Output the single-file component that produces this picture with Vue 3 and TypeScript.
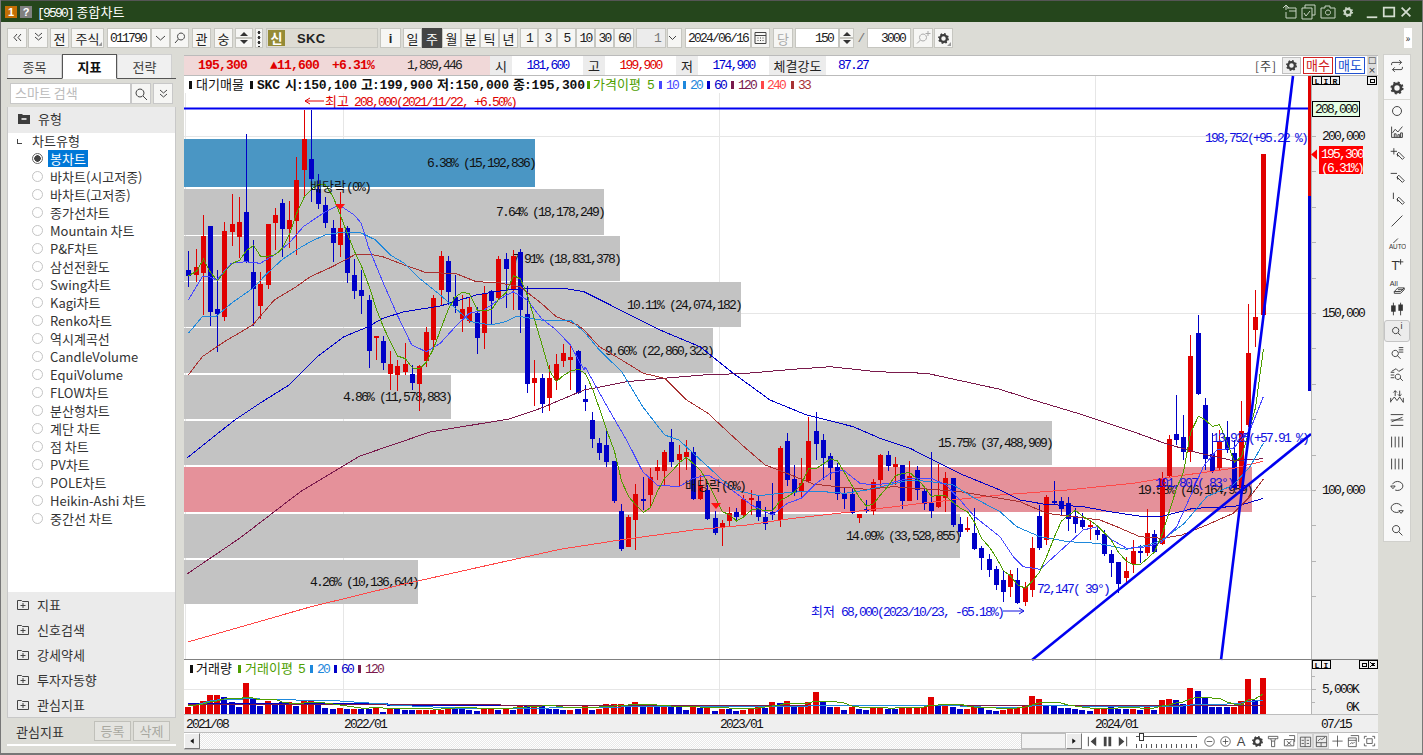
<script setup lang="ts">
interface ToolItem {
  t?: string
  w: number
  ml?: number
  d?: string
  gear?: boolean
  cls?: string
}

type Pt = [number, number]

// toolbar, left to right
const toolbar: ToolItem[] = [
  { w: 20, d: 'M9 6L6 9.5 9 13M13 6l-3 3.5 3 3.5' },
  { w: 20, ml: 1, d: 'M6 5l3.5 3L13 5M6 9l3.5 3L13 9' },
  { t: '전', w: 19, ml: 2 },
  { t: '주식', w: 33, ml: 2, cls: 'corner' },
  { t: '011790', w: 44, ml: 3, cls: 'input mono' },
  { w: 19, d: 'M5 8l4.5 4L14 8' },
  { w: 19, d: 'M11 5a3.5 3.5 0 1 0 .01 0M8.5 11L5 15' },
  { t: '관', w: 19, ml: 3 },
  { t: '숭', w: 19, ml: 3 },
  { w: 18, ml: 2, cls: 'spin' },
  { w: 8, ml: 2, cls: 'dots' },
  { w: 112, ml: 3, cls: 'combo' },
  { t: 'i', w: 21, ml: 2, cls: 'bold' },
  { t: '일', w: 19, ml: 2 },
  { t: '주', w: 20, cls: 'dark' },
  { t: '월', w: 19 },
  { t: '분', w: 19 },
  { t: '틱', w: 19 },
  { t: '년', w: 19 },
  { t: '1', w: 18, ml: 2, cls: 'mono' },
  { t: '3', w: 19, cls: 'mono' },
  { t: '5', w: 19, cls: 'mono' },
  { t: '10', w: 19, cls: 'mono' },
  { t: '30', w: 19, cls: 'mono' },
  { t: '60', w: 20, cls: 'mono' },
  { t: '1', w: 30, ml: 2, cls: 'mono right off' },
  { w: 15, ml: 1, d: 'M4 8l3.5 3.5L11 8' },
  { t: '2024/06/16', w: 66, ml: 3, cls: 'input mono' },
  { w: 19, d: 'M4 4.5h11v11H4zM4 7.5h11M6.5 10h1M9 10h1M11.5 10h1M6.5 12.5h1M9 12.5h1M11.5 12.5h1' },
  { t: '당', w: 20, ml: 3, cls: 'off-text' },
  { t: '150', w: 44, ml: 2, cls: 'input mono right' },
  { w: 15, cls: 'spin' },
  { t: '/', w: 13, cls: 'plain mono' },
  { t: '3000', w: 44, cls: 'input mono right' },
  { w: 20, ml: 2, d: 'M9 6a3.5 3.5 0 1 0 .01 0M6.5 12L3 15.5M14 3v5M11.5 5.5h5', cls: 'off-icon' },
  { w: 19, ml: 1, gear: true, cls: 'corner' },
]

const tabs = ['종목', '지표', '전략']

const chartTypes = [
  '봉차트', '바차트(시고저종)', '바차트(고저종)', '종가선차트', 'Mountain 차트', 'P&F차트', '삼선전환도',
  'Swing차트', 'Kagi차트', 'Renko차트', '역시계곡선', 'CandleVolume', 'EquiVolume', 'FLOW차트',
  '분산형차트', '계단 차트', '점 차트', 'PV차트', 'POLE차트', 'Heikin-Ashi 차트', '중간선 차트',
]

const groups = ['지표', '신호검색', '강세약세', '투자자동향', '관심지표']

const infoCells = [
  { t: '195,300', w: 77, cls: 'pink red b' },
  { t: '▲11,600', w: 67, cls: 'pink red b' },
  { t: '+6.31%', w: 50, cls: 'pink red b' },
  { t: '1,869,446', w: 112, cls: 'pink' },
  { t: '시', w: 22, cls: 'lbl' },
  { t: '181,600', w: 71, cls: 'blue' },
  { t: '고', w: 22, cls: 'lbl' },
  { t: '199,900', w: 71, cls: 'red' },
  { t: '저', w: 22, cls: 'lbl' },
  { t: '174,900', w: 71, cls: 'blue' },
  { t: '체결강도', w: 57, cls: 'lbl' },
  { t: '87.27', w: 54, cls: 'blue' },
]

// price candles, read off the reference at 3x: color top bodyTop bodyBottom bottom
const rawA = `b 452 510 527 560,r 447 501 524 545,r 345 407 518 645,b 378 378 635 678,b 510 627 641 755,r 365 393 650 662,r 282 372 395 437,r 290 366 410 475,b 102 336 485 490,b 420 516 566 678,r 516 552 618 657,r 372 372 554 566,r 324 345 368 450,b 297 309 387 470,r 303 360 387 445,r 170 239 363 465,r 30 117 210 290,b 30 177 237 305,b 222 267 312 327,b 291 315 369 385,b 360 384 429 485,r 276 384 435 470,b 378 384 518 548,b 477 525 572 597,b 510 570 588 642,b 585 600 752 803,r 708 709 712 780,b 708 723 789 810,r 753 792 822 870,r 780 798 825 873,r 729 792 816 825,b 795 822 849 870,r 795 798 852 932,r 681 696 783 800,r 585 594 720 750,r 453 468 570 615,b 468 483 576 615,b 525 591 618 640,r 585 627 657 697,r 590 621 663 670,b 620 639 714 762,r 558 579 699 747,b 570 573 603 675,r 468 477 594 600,b 460 477 507 624,r 450 468 570 630,b 447 456 630 698,b 558 643 852 880,r 780 834 849 917,b 822 834 912 938,r 795 834 894 932,r 762 792 840 870,r 732 759 783 800,r 735 771 780 870`
const rawB = `b 60 63 190 192,b 165 207 215 242,b 247 270 327 354,b 324 339 369 390,b 300 345 396 412,b 393 393 513 520,b 522 543 657 662,r 555 561 651 651,r 462 492 570 660,b 440 507 513 540,r 415 441 495 528,r 390 411 423 450,r 360 366 423 465,b 297 336 396 410,r 345 372 390 470,r 330 366 381 420,b 352 366 507 510,r 435 465 507 510,b 465 480 567 570,b 543 564 609 615,r 570 579 591 648,r 530 549 573 588,b 534 546 561 570,r 495 507 555 558,r 480 504 510 555,b 495 513 561 573,b 530 561 582 600,b 459 546 555 570,r 348 354 570 590,b 309 333 450 467,b 405 447 489 498,r 384 459 486 500,r 261 333 453 460,b 246 303 342 390,b 312 330 384 450,b 370 378 414 450,b 400 411 492 510,b 472 489 507 537,b 478 492 549 552,r 552 552 564 579,b 510 537 543 549,r 447 456 543 555,r 372 375 450 475,b 363 375 408 423,r 381 402 411 465,b 405 405 513 537,r 393 438 513 513,b 408 420 480 510,b 477 483 522 540,b 366 519 543 564,r 402 498 531 534,r 426 444 504 546,b 444 444 585 592,b 561 582 606 622,r 560 593 600 607,b 535 609 657 660,b 648 654 684 720,b 672 687 720 740,b 708 717 765 780`
const rawC = `b 810 840 876 905,r 810 822 860 890,b 805 840 910 912,r 845 862 907 917,r 710 744 870 890,b 615 648 744 750,r 585 591 720 735,b 543 603 609 612,b 590 603 627 648,b 592 609 657 693,b 625 648 672 699,b 640 660 681 687,r 660 675 681 720,b 680 690 705 720,b 690 702 762 768,b 750 762 789 830,b 785 786 852 880,r 770 813 834 855,r 720 753 792 820,b 735 753 759 788,r 627 699 759 768,b 690 702 756 760,r 516 534 732 735,r 405 417 528 530,b 285 402 420 435,b 345 411 456 480,r 105 168 456 485,b 45 99 282 285,b 295 315 477 510,b 400 462 513 520,r 390 427 504 510,b 363 411 450 460,b 420 459 564 570,r 303 393 564 600,r 12 159 375 380,r -30 51 90 140,r -438 -438 45 45`

const parse = (raw: string, oy: number) =>
  raw.split(',').map((row) => {
    const [c, a, b, e, f] = row.split(' ')
    return { up: c === 'r', hi: oy + +a / 3, top: oy + +b / 3, bot: oy + +e / 3, lo: oy + +f / 3 }
  })

const candleX = (i: number) => Math.round(188.3 + i * 7.21)

const candles = [...parse(rawA, 100), ...parse(rawB, 330), ...parse(rawC, 300)].map((c, i) => ({
  ...c,
  x: candleX(i),
}))

const toPoints = (pts: Pt[]) => pts.map(([x, y]) => `${x.toFixed(1)},${y.toFixed(1)}`).join(' ')

const sma = (vals: number[], n: number) =>
  vals.map((_, i) => {
    const part = vals.slice(Math.max(0, i - n + 1), i + 1)
    return part.reduce((s, v) => s + v, 0) / part.length
  })

// joins crops of the reference: [offsetX, offsetY, points at 3x]
const join = (...segs: [number, number, number[]][]) => {
  const out: Pt[] = []
  for (const [ox, oy, arr] of segs) {
    for (let i = 0; i < arr.length; i += 2) {
      const x = ox + arr[i] / 3
      if (!out.length || x > out[out.length - 1][0]) out.push([x, oy + arr[i + 1] / 3])
    }
  }
  return out
}

const closes = candles.map((c) => (c.up ? c.top : c.bot))
const ma5 = sma(closes, 5).map((y, i): Pt => [candles[i].x + 0.5, y])

const ma10 = join(
  [184, 100, [13,600,55,530,76,530,98,540,142,490,184,485,229,490,271,465,315,430,358,380,424,335,466,315,511,345,532,370,553,440,596,545,640,645,683,735,727,755,769,730,814,680,856,640,900,630,943,600,987,575,1030,600,1072,655,1117,690,1159,735,1200,810]],
  [560, 330, [75,110,139,225,205,340,248,425,292,465,357,470,400,445,444,435,487,460,529,490,574,525,616,545,637,555,682,520,724,505,769,460,811,430,850,420,900,460,941,465,985,460,1049,445,1114,445,1158,465,1200,510,1244,560,1320,620]],
  [1000, 300, [0,710,40,770,70,800,120,808,184,750,250,690,292,680,337,720,380,745,445,740,487,725,530,680,575,580,610,500,650,450,700,445,750,390,790,290]],
)
const ma20 = join(
  [184, 100, [13,700,55,650,98,648,142,610,206,565,250,520,293,480,337,450,379,425,424,405,466,398,530,398,575,420,619,465,661,490,706,535,769,585,814,625,860,665,921,675,965,665,1000,648,1072,660,1159,660,1200,695]],
  [560, 330, [118,60,185,125,248,230,314,315,357,330,400,370,444,410,487,450,529,480,596,497,660,490,724,485,790,485,855,490,920,480,985,465,1049,450,1114,455,1180,465,1244,505,1320,545]],
  [1000, 300, [0,620,50,680,120,710,205,725,292,730,380,748,445,735,487,720,553,670,620,590,700,555,750,500,790,430]],
)
const ma33 = join(
  [184, 100, [13,825,55,770,121,725,206,675,271,600,337,560,379,530,445,500,511,465,553,462,596,470,661,495,727,518,814,520,877,545,943,548,1008,560,1072,610,1117,650,1181,675,1200,690]],
  [560, 330, [118,50,185,90,250,130,314,145,380,210,444,250,487,290,552,350,616,405,680,430,760,462,830,470,920,478,1000,470,1114,478,1200,485,1320,505]],
  [1000, 300, [0,595,60,605,140,640,220,650,300,660,350,680,420,710,487,715,545,705,620,675,700,640,750,590,790,538]],
)
const ma60 = join(
  [0, 0, [561,1374,636,1314]],
  [184, 100, [155,958,235,905,315,855,400,770,480,710,553,680,596,655,661,635,769,618,877,585,965,570,1030,565,1140,565,1200,575]],
  [560, 330, [300,0,420,50,520,130,630,210,740,255,880,290,960,325,1050,355,1120,390,1210,435,1320,480]],
  [1000, 300, [0,575,60,600,130,612,250,620,330,635,430,650,490,648,580,625,700,620,740,610,790,595]],
)
const ma120 = join(
  [0, 0, [561,1722,720,1614,900,1476,1080,1368,1290,1296,1527,1257]],
  [184, 100, [1070,925,1200,870]],
  [560, 330, [100,175,200,155,310,145,430,135,560,130,700,118,810,110,950,125,1100,130,1320,178]],
  [1000, 300, [0,270,100,300,250,345,400,395,500,432,600,460,700,482,790,476]],
)
const ma240 = join(
  [0, 0, [564,1926,930,1821,1200,1755,1440,1701]],
  [560, 330, [0,658,180,630,400,600,560,585,700,565,880,545,1100,518,1320,495]],
  [1000, 300, [200,570,400,550,520,530,700,505,790,484]],
)

const maLines = [
  { cls: 'c240', pts: toPoints(ma240) },
  { cls: 'c120', pts: toPoints(ma120) },
  { cls: 'c60', pts: toPoints(ma60) },
  { cls: 'c33', pts: toPoints(ma33) },
  { cls: 'c20', pts: toPoints(ma20) },
  { cls: 'c10', pts: toPoints(ma10) },
  { cls: 'c5', pts: toPoints(ma5) },
]

const bands = [
  { y: 139, h: 48, r: 535, t: '6.38% (15,192,836)', cls: 'hot' },
  { y: 189, h: 46, r: 604, t: '7.64% (18,178,249)', cls: '' },
  { y: 236, h: 45, r: 620, t: '7.91% (18,831,378)', cls: '' },
  { y: 282, h: 45, r: 741, t: '10.11% (24,074,182)', cls: '' },
  { y: 328, h: 45, r: 713, t: '9.60% (22,860,323)', cls: '' },
  { y: 375, h: 44, r: 451, t: '4.86% (11,578,883)', cls: '' },
  { y: 421, h: 44, r: 1052, t: '15.75% (37,488,909)', cls: '' },
  { y: 467, h: 45, r: 1252, t: '19.58% (46,164,959)', cls: 'now' },
  { y: 514, h: 44, r: 960, t: '14.09% (33,528,855)', cls: '' },
  { y: 560, h: 44, r: 418, t: '4.26% (10,136,644)', cls: '' },
]

const legend = [
  { x: 189, bar: 'k' },
  { x: 196, t: '대기매물', cls: 'ko k' },
  { x: 250, bar: 'k' },
  { x: 257, t: 'SKC', cls: 'bn k' },
  { x: 285, t: '시', cls: 'ko k bk' },
  { x: 296, t: ':150,100', cls: 'bn k' },
  { x: 361, t: '고', cls: 'ko k bk' },
  { x: 372, t: ':199,900', cls: 'bn k' },
  { x: 437, t: '저', cls: 'ko k bk' },
  { x: 448, t: ':150,000', cls: 'bn k' },
  { x: 513, t: '종', cls: 'ko k bk' },
  { x: 524, t: ':195,300', cls: 'bn k' },
  { x: 587, bar: 'c5' },
  { x: 593, t: '가격이평', cls: 'ko fc5' },
  { x: 647, t: '5', cls: 'num fc5' },
  { x: 659, bar: 'c10' },
  { x: 666, t: '10', cls: 'num fc10' },
  { x: 683, bar: 'c20' },
  { x: 690, t: '20', cls: 'num fc20' },
  { x: 707, bar: 'c60' },
  { x: 714, t: '60', cls: 'num fc60' },
  { x: 731, bar: 'c120' },
  { x: 738, t: '120', cls: 'num fc120' },
  { x: 761, bar: 'c240' },
  { x: 767, t: '240', cls: 'num fc240' },
  { x: 791, bar: 'c33' },
  { x: 798, t: '33', cls: 'num fc33' },
]

const volLegend = [
  { x: 190, bar: 'k' },
  { x: 196, t: '거래량', cls: 'ko k' },
  { x: 238, bar: 'c5' },
  { x: 245, t: '거래이평', cls: 'ko fc5' },
  { x: 298, t: '5', cls: 'num fc5' },
  { x: 310, bar: 'c20' },
  { x: 317, t: '20', cls: 'num fc20' },
  { x: 334, bar: 'c60' },
  { x: 341, t: '60', cls: 'num fc60' },
  { x: 358, bar: 'c120' },
  { x: 365, t: '120', cls: 'num fc120' },
]

const notes = [
  { x: 325, y: 106, t: '최고', cls: 'ko fred' },
  { x: 354, y: 106, t: '208,000(2021/11/22, +6.50%)', cls: 'num fred' },
  { x: 1205, y: 142, t: '198,752(+95.22 %)', cls: 'num fblue' },
  { x: 310, y: 191, t: '배당락', cls: 'ko k' },
  { x: 346, y: 191, t: '(0%)', cls: 'num k' },
  { x: 685, y: 490, t: '배당락', cls: 'ko k' },
  { x: 721, y: 490, t: '(0%)', cls: 'num k' },
  { x: 1037, y: 593, t: '72,147( 39°)', cls: 'num fblue' },
  { x: 811, y: 616, t: '최저', cls: 'ko fblue' },
  { x: 841, y: 616, t: '68,000(2023/10/23, -65.18%)', cls: 'num fblue' },
  { x: 1212, y: 442, t: '13,925(+57.91 %)', cls: 'num fblue' },
  { x: 1155, y: 487, t: '101,807( 83°)', cls: 'num fblue' },
]

// signed volume bar heights at 3x, positive red, negative blue
const volRaw = [
  22,26,39,57,57,-51,-36,-21,93,-45,-24,39,-27,-36,36,-24,39,39,-36,-18,-15,18,-15,16,-15,-15,21,-6,18,-15,
  -12,-12,12,12,12,12,21,-21,-15,-12,-9,15,18,-12,18,-12,27,-26,20,-27,-15,-15,-12,12,-15,27,-12,15,29,
  30,30,-24,36,-24,24,-21,21,-21,-24,-12,21,-18,18,-9,15,-15,-9,12,15,27,-18,36,-33,39,-21,27,36,66,-36,
  -21,21,-12,21,-15,-12,18,18,-15,-15,18,18,18,21,51,-24,24,-21,-15,15,21,-18,-12,-9,12,15,18,27,54,45,
  -24,-24,-18,-18,-15,-12,-9,15,15,-21,-15,-15,15,-12,21,-12,42,45,-42,-30,78,-69,-51,-21,-21,-21,21,39,105,-42,108,
]
const volBars = volRaw.map((v, i) => {
  const h = Math.abs(v) / 3
  return { x: candleX(i) - 3, y: 714 - h, h, up: v > 0 }
})
const volAbs = volRaw.map((v) => Math.abs(v) / 3)
const volMa5 = toPoints(sma(volAbs, 5).map((h, i): Pt => [candleX(i), Math.round(712 - h * 0.85)]))
const volMa20 = toPoints(sma(volAbs, 20).map((h, i): Pt => [candleX(i), Math.round(713 - h)]))

const yTicks = Array.from({ length: 15 }, (_, i) => 136 + (i - 1) * 35.4)

const tools = [
  { d: 'M4 9V7.5A1.5 1.5 0 0 1 5.5 6H15M12.5 3.5L15 6l-2.5 2.5M16 11v1.5a1.5 1.5 0 0 1-1.5 1.5H5M7.5 11.5L5 14l2.5 2.5' },
  { gear: true },
  { d: 'M15 10a5 5 0 1 1-10 0a5 5 0 1 1 10 0' },
  { d: 'M4 4v12h12M7 16v-4h2v4M11 16v-3h2v3M14 16v-5h2v5M5 11l3-4 3 3 5-6' },
  { d: 'M3 7h7M6.5 3.5v7M10 10l2-2 6 6-2 2zM10 10l1 3' },
  { d: 'M3 6h7M10 10l2-2 6 6-2 2zM10 10l1 3' },
  { d: 'M6 3v7M10 10l2-2 6 6-2 2zM10 10l1 3' },
  { d: 'M4 16L16 4' },
  { d: 'M6 10l5-5', label: 'AUTO', lx: 1, ly: 17, ls: 7 },
  { d: 'M14 3.5v6M11 6.5h6', label: 'T', lx: 4, ly: 16, ls: 14 },
  { d: 'M7 15l4-4h7l-4 4zM7 15v2h7l4-4v-2M11 13h6', label: 'All', lx: 2, ly: 9, ls: 8 },
  { d: 'M6 3v14M14 3v14', bars: true },
  { d: 'M8.5 6a3.5 3.5 0 1 0 .01 0M11 12l3 3', label: 'i', lx: 14, ly: 8, ls: 10, sel: true },
  { d: 'M8 7a3.5 3.5 0 1 0 .01 0M10.5 13l3.5 3.5M12 4h5M12 6.5h5M12 9h5' },
  { d: 'M3 7h4M3 10h4M3 13h4M11 9a3 3 0 1 0 .01 0M13.5 13.5l3 3M4 6l5-3 3 3 5-3' },
  { d: 'M8 3v6M6 5l2-2 2 2M13 9V3M11 7l2 2 2-2M3 15l4-5 3 4 3-4 4 6M3 11v5M17 11v5' },
  { d: 'M3 4h14M3 16h14M4 12L16 7M3 10h14' },
  { d: 'M4 4v12M8 4v12M12 4v12M16 4v12' },
  { d: 'M4 4v12M8 4v12M12 4v12M16 4v12' },
  { d: 'M5 8a6 5 0 1 1 3 6.5M3 10h5l-2.5 3z' },
  { d: 'M15 8a6 5 0 1 0-3 6.5M17 13h-5l2.5 3z' },
  { d: 'M9 5a4 4 0 1 0 .01 0M12 12l4 4' },
]

const bottomBtns: { d?: string; gear?: boolean; sel?: boolean; t?: string }[] = [
  { d: 'M9.5 5.5a6 6 0 1 0 .01 0M6 11.5h7' },
  { d: 'M9.5 5.5a6 6 0 1 0 .01 0M6 11.5h7M9.5 8v7' },
  { t: 'A' },
  { gear: true },
  { d: 'M3 5h12v3H3zM6 8l1 3M12 8l-1 3M7 11h4v7H7z' },
  { d: 'M3 9h12v8H3zM6 11l6 5M12 11l-6 5M9 4h7v8' },
  { d: 'M3 6h13v12H3zM9 6v12M4.5 10h3M4.5 14h3M11 10h3M11 14h3', sel: true },
  { d: 'M3 5h13v13H3zM3 13h13M9 13v5M5 11l3-3 2 1 4-3', sel: true },
  { d: 'M9.5 4v14M3 11h13' },
  { d: 'M6 4h10v8M3 7h10v11H3zM3 10h10M5 15l2-2 2 1 2-2' },
  { d: 'M3 8V5h3M13 5h3v3M16 14v3h-3M6 17H3v-3M6 8h7v6H6z' },
]
</script>

<template>
  <div class="win">
    <svg class="defs" width="0" height="0" aria-hidden="true">
      <symbol id="gear" viewBox="0 0 20 20">
        <circle cx="10" cy="10" r="4.5" fill="none" stroke="currentColor" stroke-width="3" />
        <circle cx="10" cy="10" r="6.3" fill="none" stroke="currentColor" stroke-width="2" stroke-dasharray="2.3 2.65" />
      </symbol>
    </svg>

    <header class="title">
      <span class="badge orange">1</span>
      <span class="badge gray">?</span>
      <span class="title-text"><span class="mono-t">[9590]</span> 종합차트</span>
      <div class="title-icons">
        <svg viewBox="0 0 16 16" class="ti"><path d="M5 4h9v10H4V8M4 6V1M1 4l3-3 3 3M7 7h7" /></svg>
        <svg viewBox="0 0 16 16" class="ti"><path d="M4 4V1h10v10h-3M1 4h10v11H1zM3 9l2 3 4-5" /></svg>
        <svg viewBox="0 0 16 16" class="ti"><path d="M1 4h4V2h5v2h5v10H1zM8 6a2.5 2.5 0 1 0 .01 0" /></svg>
        <svg viewBox="0 0 20 20" class="ti g"><use href="#gear" /></svg>
        <svg viewBox="0 0 16 16" class="wi"><path d="M2 14h12" /></svg>
        <svg viewBox="0 0 16 16" class="wi"><path d="M2 3h12v10H2z" /></svg>
        <svg viewBox="0 0 16 16" class="wi"><path d="M3 3l10 10M13 3L3 13" /></svg>
      </div>
    </header>

    <div class="toolbar">
      <div
        v-for="(b, i) in toolbar"
        :key="i"
        class="tb"
        :class="b.cls"
        :style="{ width: b.w + 'px', marginLeft: (b.ml ?? 0) + 'px' }"
      >
        <template v-if="b.cls === 'combo'">
          <span class="shin">신</span>
          <span class="skc">SKC</span>
        </template>
        <template v-else-if="b.cls === 'spin'">
          <i class="up"></i>
          <i class="mid"></i>
          <i class="down"></i>
        </template>
        <svg v-else-if="b.gear" viewBox="0 0 20 20" class="tb-gear"><use href="#gear" /></svg>
        <svg v-else-if="b.d" viewBox="0 0 19 20" class="tb-ico"><path :d="b.d" /></svg>
        <template v-else>{{ b.t }}</template>
      </div>
      <div class="more">»</div>
    </div>

    <div class="body">
      <aside class="left">
        <div class="tabs">
          <div v-for="t in tabs" :key="t" class="tab" :class="{ on: t === '지표' }">{{ t }}</div>
        </div>
        <div class="search">
          <div class="search-box">스마트 검색</div>
          <div class="search-btn">
            <svg viewBox="0 0 19 20" class="tb-ico"><path d="M8 5a4 4 0 1 0 .01 0M11 12l4 4" /></svg>
          </div>
          <div class="search-btn gap">
            <svg viewBox="0 0 19 20" class="tb-ico"><path d="M6 6l3.5 3L13 6M6 10l3.5 3L13 10" /></svg>
          </div>
        </div>
        <div class="head">
          <svg viewBox="0 0 12 11" class="folder"><path d="M0 1h4l1 1h7v9H0z" fill="#3c3c3c" /><path d="M3.5 6h5" stroke="#fff" stroke-width="1.5" /></svg>
          유형
        </div>
        <div class="tree">
          <div class="tree-root"><span class="elbow"></span>차트유형</div>
          <div v-for="(c, i) in chartTypes" :key="c" class="tree-row">
            <span class="radio" :class="{ on: i === 0 }"></span>
            <span class="tree-label" :class="{ on: i === 0 }">{{ c }}</span>
          </div>
        </div>
        <div class="groups">
          <div v-for="g in groups" :key="g" class="group">
            <svg viewBox="0 0 12 11" class="plus"><path d="M.5 1.5h4l1 1h6v8H.5zM3.5 6.5h5M6 4v5" fill="none" stroke="#444" /></svg>
            {{ g }}
          </div>
        </div>
        <div class="foot">
          <span class="foot-label">관심지표</span>
          <span class="foot-btn first">등록</span>
          <span class="foot-btn">삭제</span>
        </div>
      </aside>

      <main class="main">
        <div class="info">
          <div
            v-for="c in infoCells"
            :key="c.t"
            class="cell"
            :class="c.cls"
            :style="{ width: c.w + 'px' }"
          >{{ c.t }}</div>
          <div class="info-right">
            <span class="unit">[주]</span>
            <span class="cfg"><svg viewBox="0 0 20 20" class="tb-gear"><use href="#gear" /></svg></span>
            <span class="trade buy">매수</span>
            <span class="trade sell">매도</span>
            <span class="stack"><i>□</i><i>×</i></span>
          </div>
        </div>

        <svg class="chart" viewBox="184 76 1194 657" width="1194" height="657">
          <rect x="1311" y="76" width="67" height="657" fill="#efefef" />
          <rect x="184" y="714" width="1194" height="19" fill="#efefef" />

          <!-- grid -->
          <g class="grid">
            <path d="M343.5 76v638M719.5 76v638M1095.5 76v638M185.5 76v583M184 136.5h1127M184 313.5h1127M184 490.5h1127M184 689.5h1127" />
          </g>

          <!-- volume profile bands -->
          <rect
            v-for="b in bands"
            :key="b.y"
            x="184"
            :y="b.y"
            :width="b.r - 184"
            :height="b.h"
            class="band"
            :class="b.cls"
          />
          <text v-for="b in bands" :key="b.t" :x="b.r" :y="b.y + b.h / 2 + 4" class="num k end">{{ b.t }}</text>

          <!-- candles -->
          <g v-for="c in candles" :key="c.x" :class="c.up ? 'up' : 'dn'">
            <rect :x="c.x" :y="c.hi" width="1" :height="c.lo - c.hi" />
            <rect :x="c.x - 2" :y="c.top" width="5" :height="Math.max(c.bot - c.top, 1.5)" />
          </g>

          <polyline v-for="m in maLines" :key="m.cls" :points="m.pts" class="ma" :class="m.cls" />

          <text v-for="n in notes" :key="n.x + n.t" :x="n.x" :y="n.y" :class="n.cls">{{ n.t }}</text>

          <path d="M305 101h19M305 101l5-3M305 101l5 3" class="arrow-red" />
          <path d="M1003 611h21M1024 611l-5-3M1024 611l-5 3" class="arrow-blue" />
          <path d="M335 204h10l-5 6zM711 503h10l-5 6z" fill="#ff1010" />

          <!-- trend lines -->
          <path d="M184 108.5H1311" class="trend thin" />
          <path d="M1032 660L1311 434" class="trend" />
          <path d="M1221 660L1293 76" class="trend" />

          <!-- top legend -->
          <rect x="184" y="76" width="640" height="17" fill="#fff" />
          <template v-for="l in legend" :key="l.x">
            <rect v-if="l.bar" :x="l.x" y="81" width="3" height="8" :class="'bar-' + l.bar" />
            <text v-else :x="l.x" y="89" :class="l.cls">{{ l.t }}</text>
          </template>

          <!-- price axis -->
          <path d="M1311.5 76v638" class="axis" />
          <path
            v-for="y in yTicks"
            :key="y"
            :d="`M1312 ${Math.round(y) + 0.5}h4`"
            class="axis"
          />
          <rect x="1308" y="76" width="3" height="120" fill="#e00000" />
          <rect x="1308" y="196" width="3" height="195" fill="#0000d0" />
          <g class="boxes">
            <rect x="1312.5" y="76.5" width="9" height="8" />
            <rect x="1321.5" y="76.5" width="9" height="8" />
            <rect x="1330.5" y="76.5" width="9" height="8" />
            <text x="1314.5" y="84">L</text>
            <text x="1323.5" y="84">I</text>
            <text x="1332.5" y="84">R</text>
            <rect x="1367.5" y="76.5" width="9" height="8" />
            <rect x="1370" y="79" width="4" height="3" />
          </g>
          <text x="1364" y="140" class="num k end">200,000</text>
          <text x="1364" y="317" class="num k end">150,000</text>
          <text x="1364" y="494" class="num k end">100,000</text>
          <rect x="1312.5" y="101.5" width="47" height="15" fill="#e4ffe4" stroke="#000" />
          <text x="1315" y="113" class="num k">208,000</text>
          <path d="M1311 154.5l6-5v10z" fill="#ff0000" />
          <rect x="1319" y="146" width="44" height="28" fill="#ff0000" />
          <text x="1321" y="158" class="num white">195,300</text>
          <text x="1321" y="172" class="num white">(6.31%)</text>

          <!-- volume pane -->
          <rect x="184" y="659" width="1194" height="1" fill="#808080" />
          <rect v-for="(v, i) in volBars" :key="i" :x="v.x" :y="v.y" width="6" :height="v.h" :class="v.up ? 'vol-up' : 'vol-dn'" />
          <polyline points="188,703 387,703 387,705 1263,705" class="ma c60" />
          <polyline points="188,704 500,704 500,705 1263,705" class="ma c120" />
          <polyline :points="volMa20" class="ma c20" />
          <polyline :points="volMa5" class="ma c5" />
          <template v-for="l in volLegend" :key="l.x">
            <rect v-if="l.bar" :x="l.x" y="665" width="3" height="8" :class="'bar-' + l.bar" />
            <text v-else :x="l.x" y="673" :class="l.cls">{{ l.t }}</text>
          </template>
          <path d="M1312 689.5h4M1312 702.5h3M1312 676.5h3" class="axis" />
          <g class="boxes">
            <rect x="1312.5" y="660.5" width="9" height="8" />
            <rect x="1321.5" y="660.5" width="9" height="8" />
            <text x="1314.5" y="668">L</text>
            <text x="1323.5" y="668">I</text>
            <rect x="1359.5" y="660.5" width="9" height="8" />
            <rect x="1368.5" y="660.5" width="9" height="8" />
            <rect x="1362" y="663" width="4" height="3" />
            <path d="M1370.5 662.5l5 4M1375.5 662.5l-5 4" />
          </g>
          <text x="1358" y="693" class="num k end">5,000K</text>
          <text x="1358" y="711" class="num k end">0K</text>
          <rect x="184" y="714" width="1194" height="1" fill="#bdbdbd" />
          <rect x="184" y="732" width="1194" height="1" fill="#bdbdbd" />

          <!-- dates -->
          <text x="186" y="728" class="num k">2021/08</text>
          <text x="344" y="728" class="num k">2022/01</text>
          <text x="720" y="728" class="num k">2023/01</text>
          <text x="1095" y="728" class="num k">2024/01</text>
          <text x="1321" y="728" class="num k">07/15</text>
        </svg>

        <div class="scrollrow">
          <div class="sb-btn"><svg viewBox="0 0 16 16" class="sb-tri"><path d="M10 5v6L6 8z" /></svg></div>
          <div class="sb-track"></div>
          <div class="sb-thumb"></div>
          <div class="sb-btn"><svg viewBox="0 0 16 16" class="sb-tri"><path d="M6 5v6l4-3z" /></svg></div>
          <div class="player">
            <svg viewBox="0 0 14 14" class="pl"><path d="M2 2v10h1V2zM11 2v10L5 7z" /></svg>
            <svg viewBox="0 0 14 14" class="pl"><path d="M3 2h3v10H3zM8 2h3v10H8z" /></svg>
            <svg viewBox="0 0 14 14" class="pl"><path d="M3 2v10l6-5zM11 2v10h1V2z" /></svg>
          </div>
          <div class="slider">
            <i class="slider-line"></i>
            <i class="slider-knob"></i>
            <i class="slider-ticks"></i>
          </div>
          <div class="btns">
            <div v-for="(b, i) in bottomBtns" :key="i" class="bbtn" :class="{ sel: b.sel }">
              <span v-if="b.t" class="bbtn-t">{{ b.t }}</span>
              <svg v-else-if="b.gear" viewBox="0 0 20 20" class="bbtn-ico"><use href="#gear" /></svg>
              <svg v-else viewBox="0 2 19 19" class="bbtn-ico stroke"><path :d="b.d" /></svg>
            </div>
          </div>
        </div>
      </main>

      <nav class="tools">
        <div v-for="(t, i) in tools" :key="i" class="tool" :class="{ sel: t.sel, div: i === 2 }">
          <svg v-if="t.gear" viewBox="0 0 20 20" class="tool-ico g"><use href="#gear" /></svg>
          <svg v-else viewBox="0 0 20 20" class="tool-ico">
            <path :d="t.d" />
            <template v-if="t.bars">
              <rect x="3.5" y="6" width="5" height="7" class="solid" />
              <rect x="11.5" y="5" width="5" height="7" class="solid" />
            </template>
            <text v-if="t.label" :x="t.lx" :y="t.ly" :font-size="t.ls" class="tool-t">{{ t.label }}</text>
          </svg>
        </div>
      </nav>
    </div>
  </div>
</template>

<style>
html,
body {
  margin: 0;
  background: #dcdcd6;
}
</style>

<style scoped>
.win {
  width: 1423px;
  height: 755px;
  overflow: hidden;
  background: #dcdcd6;
  display: flex;
  flex-direction: column;
  font-family: 'Noto Sans CJK KR', sans-serif;
  font-size: 13px;
  color: #333;
  box-sizing: border-box;
  border-bottom: 2px solid #777;
  border-left: 1px solid #777;
  border-right: 1px solid #777;
}

.defs {
  position: absolute;
}

.title {
  height: 22px;
  flex: none;
  box-sizing: border-box;
  border-top: 1px solid #555;
  background: #25461c;
  display: flex;
  align-items: center;
  padding-left: 4px;
  color: #fff;
}

.badge {
  width: 12px;
  height: 12px;
  margin-right: 3px;
  font: bold 11px/12px 'Liberation Sans', sans-serif;
  text-align: center;
}

.orange {
  background: #c46f05;
}

.gray {
  background: #808080;
}

.title-text {
  margin-left: 2px;
  font-size: 13px;
  letter-spacing: 0.2px;
}

.mono-t {
  font-family: 'Liberation Mono', monospace;
  letter-spacing: -1.8px;
  font-size: 13px;
}

.title-icons {
  margin-left: auto;
  display: flex;
  align-items: center;
  gap: 3px;
  padding-right: 9px;
}

.ti {
  width: 16px;
  height: 16px;
  fill: none;
  stroke: #c8d4c4;
  stroke-width: 1;
}

.ti.g {
  width: 14px;
  height: 14px;
  color: #c8d4c4;
  stroke: none;
  margin: 0 7px 0 2px;
}

.wi {
  width: 14px;
  height: 14px;
  fill: none;
  stroke: #d4ddd0;
  stroke-width: 2;
}

.toolbar {
  height: 33px;
  flex: none;
  box-sizing: border-box;
  padding: 6px 0 0 6px;
  display: flex;
  align-items: flex-start;
}

.tb {
  height: 20px;
  flex: none;
  box-sizing: border-box;
  border: 1px solid #c6c6c0;
  background: #f6f6f4;
  display: flex;
  align-items: center;
  justify-content: center;
  font-size: 13px;
  color: #222;
  position: relative;
  overflow: hidden;
}

.tb.mono,
.cell,
.mono {
  font-family: 'Liberation Mono', 'Noto Sans CJK KR', monospace;
  letter-spacing: -1.8px;
  font-size: 13px;
}

.tb.input {
  background: #fff;
  justify-content: flex-start;
  padding: 0 2px;
}

.tb.right {
  justify-content: flex-end;
  padding: 0 5px;
}

.tb.off {
  background: #ececec;
  color: #777;
}

.tb.off-text {
  color: #aaa;
}

.tb.dark {
  background: #444;
  color: #fff;
  border-color: #444;
}

.tb.bold {
  font: bold 13px 'Liberation Sans', sans-serif;
}

.tb.plain {
  background: none;
  border: none;
  color: #777;
}

.tb.dots {
  background: #f6f6f4 radial-gradient(circle, #333 1.2px, transparent 1.7px) 0 1px / 100% 5px;
}

.tb.corner::after {
  content: '';
  position: absolute;
  right: 1px;
  bottom: 1px;
  border: 2px solid transparent;
  border-right-color: #999;
  border-bottom-color: #999;
}

.tb-ico {
  width: 19px;
  height: 20px;
  fill: none;
  stroke: #444;
  stroke-width: 1;
  flex: none;
}

.off-icon .tb-ico {
  stroke: #aaa;
}

.tb-gear {
  width: 15px;
  height: 15px;
  color: #3c3c3c;
}

.tb.combo {
  background: #dedcd4;
  justify-content: flex-start;
}

.shin {
  width: 17px;
  height: 16px;
  margin-left: 1px;
  background: #958b36;
  color: #fff;
  font-weight: bold;
  font-size: 13px;
  line-height: 16px;
  text-align: center;
}

.skc {
  margin-left: 12px;
  font: bold 13px 'Liberation Sans', sans-serif;
  letter-spacing: 0.4px;
}

.tb.spin {
  flex-direction: column;
  justify-content: space-between;
  padding: 3px 0;
}

.spin .up {
  border: 4px solid transparent;
  border-top: 0;
  border-bottom: 4px solid #333;
}

.spin .mid {
  width: 100%;
  height: 2px;
  background: #c6c6c0;
}

.spin .down {
  border: 4px solid transparent;
  border-bottom: 0;
  border-top: 4px solid #333;
}

.more {
  margin-left: auto;
  margin-right: 10px;
  width: 8px;
  height: 20px;
  background: #fff;
  font-size: 10px;
  line-height: 20px;
  text-align: center;
  color: #333;
}

.body {
  flex: 1;
  min-height: 0;
  display: flex;
  align-items: flex-start;
}

/* left panel */
.left {
  width: 169px;
  margin-left: 6px;
  flex: none;
  margin-top: -1px;
  box-sizing: border-box;
  display: flex;
  flex-direction: column;
  height: 693px;
}

.tabs {
  display: flex;
  height: 25px;
  flex: none;
  border-bottom: 1px solid #555;
  box-sizing: border-box;
}

.tab {
  width: 55px;
  box-sizing: border-box;
  text-align: center;
  line-height: 23px;
  background: #f0f0f0;
  border: 1px solid #d0d0d0;
  border-bottom: none;
  color: #444;
}

.tab.on {
  background: #fff;
  border: 1px solid #555;
  border-bottom: 1px solid #fff;
  height: 25px;
  font-weight: bold;
  color: #111;
}

.search {
  display: flex;
  height: 28px;
  flex: none;
  padding: 4px 0 0 3px;
  box-sizing: border-box;
}

.search-box {
  width: 121px;
  height: 21px;
  box-sizing: border-box;
  background: #fff;
  border: 1px solid #c8c8c8;
  padding-left: 4px;
  line-height: 18px;
  color: #bbb;
}

.search-btn {
  width: 20px;
  height: 21px;
  box-sizing: border-box;
  border: 1px solid #c8c8c8;
  background: #f6f6f4;
  display: flex;
  align-items: center;
  justify-content: center;
}

.search-btn.gap {
  margin-left: 2px;
}

.head {
  height: 26px;
  flex: none;
  background: #ebebeb;
  display: flex;
  align-items: center;
  padding: 0 0 3px 10px;
  box-sizing: border-box;
  border-left: 1px solid #c8c8c8;
  border-right: 1px solid #c8c8c8;
}

.folder {
  width: 12px;
  height: 11px;
  margin-right: 8px;
}

.tree {
  height: 459px;
  flex: none;
  background: #fff;
  box-sizing: border-box;
  border-left: 1px solid #c8c8c8;
  border-right: 1px solid #c8c8c8;
}

.tree-root {
  height: 16px;
  line-height: 16px;
  display: flex;
  align-items: center;
  padding-left: 9px;
}

.elbow {
  width: 4px;
  height: 4px;
  border-left: 1px solid #444;
  border-bottom: 1px solid #444;
  margin-right: 10px;
}

.tree-row {
  height: 18px;
  display: flex;
  align-items: center;
  padding-left: 24px;
}

.radio {
  width: 11px;
  height: 11px;
  border: 1px solid #c4c4c4;
  border-radius: 50%;
  box-sizing: border-box;
  flex: none;
  background: #fff;
}

.radio.on {
  border-color: #666;
  background: radial-gradient(circle, #444 0 3px, #fff 3.5px);
}

.tree-label {
  margin-left: 5px;
  padding: 0 2px;
  line-height: 17px;
  white-space: nowrap;
  color: #333;
}

.tree-label.on {
  background: #0078d7;
  color: #fff;
}

.groups {
  height: 125px;
  flex: none;
  background: #ebebeb;
  border-left: 1px solid #c8c8c8;
  border-right: 1px solid #c8c8c8;
}

.group {
  height: 25px;
  display: flex;
  align-items: center;
  padding-left: 9px;
}

.plus {
  width: 12px;
  height: 11px;
  margin-right: 8px;
}

.foot {
  height: 29px;
  flex: none;
  display: flex;
  align-items: center;
  padding-left: 9px;
  border-top: 1px solid #c8c8c8;
  border-bottom: 2px solid #fff;
  box-sizing: border-box;
}

.foot-label {
  width: 78px;
}

.foot-btn {
  width: 37px;
  height: 20px;
  box-sizing: border-box;
  border: 1px solid #c0c0ba;
  background: #e4e4e0;
  color: #a8a8a0;
  text-align: center;
  line-height: 18px;
  margin-right: 2px;
}

/* main */
.main {
  width: 1194px;
  margin-left: 8px;
  flex: none;
  display: flex;
  flex-direction: column;
  height: 695px;
}

.info {
  height: 21px;
  flex: none;
  display: flex;
  background: #fff;
  box-sizing: border-box;
  border-top: 1px solid #bbb;
  border-bottom: 1px solid #bbb;
  align-items: stretch;
}

.cell {
  flex: none;
  text-align: center;
  line-height: 19px;
  color: #222;
}

.cell.lbl {
  background: #ececec;
  font-family: 'Noto Sans CJK KR', sans-serif;
  letter-spacing: 0;
}

.cell.pink {
  background: #f0d8d8;
}

.cell.red {
  color: #e00000;
}

.cell.blue {
  color: #0000d0;
}

.cell.b {
  font-weight: bold;
  letter-spacing: -0.8px;
}

.info-right {
  margin-left: auto;
  display: flex;
  align-items: center;
  gap: 2px;
}

.unit {
  width: 25px;
  letter-spacing: 1px;
  font-size: 12px;
  color: #444;
}

.cfg {
  width: 19px;
  height: 17px;
  border: 1px solid #c0c0c0;
  background: #efefef;
  display: flex;
  align-items: center;
  justify-content: center;
  box-sizing: border-box;
}

.trade {
  width: 30px;
  height: 17px;
  box-sizing: border-box;
  text-align: center;
  line-height: 14px;
  font-size: 13px;
  border: 1px solid;
  background: #fff;
}

.buy {
  color: #d02020;
  border-color: #d02020;
}

.sell {
  color: #2050d0;
  border-color: #2050d0;
}

.stack {
  width: 10px;
  height: 19px;
  margin-right: 1px;
  display: flex;
  flex-direction: column;
  background: #ddd;
  font: 9px/9.5px 'DejaVu Sans', sans-serif;
  text-align: center;
}

.stack i {
  font-style: normal;
}

.chart {
  display: block;
  flex: none;
  background: #fff;
  overflow: visible;
}

.grid path {
  stroke: #e6e6e6;
  fill: none;
}

.band {
  fill: #c3c3c3;
}

.band.hot {
  fill: #4a96c4;
}

.band.now {
  fill: #e5919a;
}

.num {
  font-family: 'Liberation Mono', monospace;
  font-size: 13px;
  letter-spacing: -1.8px;
}

.ko {
  font-family: 'Noto Sans CJK KR', sans-serif;
  font-size: 13px;
}

.bn {
  font-family: 'Liberation Mono', monospace;
  font-size: 13px;
  font-weight: bold;
  letter-spacing: -0.2px;
}

.bk {
  font-weight: bold;
}

.end {
  text-anchor: end;
}

.k {
  fill: #111;
}

.white {
  fill: #fff;
}

.fred {
  fill: #e00000;
}

.fblue {
  fill: #1010e0;
}

.fc5 {
  fill: #4e9e00;
}

.fc10 {
  fill: #4848ff;
}

.fc20 {
  fill: #1e88dc;
}

.fc60 {
  fill: #0000c8;
}

.fc120 {
  fill: #7a1a4c;
}

.fc240 {
  fill: #ff4848;
}

.fc33 {
  fill: #a83232;
}

.bar-k {
  fill: #111;
}

.bar-c5 {
  fill: #4e9e00;
}

.bar-c10 {
  fill: #4848ff;
}

.bar-c20 {
  fill: #1e88dc;
}

.bar-c60 {
  fill: #0000c8;
}

.bar-c120 {
  fill: #7a1a4c;
}

.bar-c240 {
  fill: #ff4848;
}

.bar-c33 {
  fill: #a83232;
}

.up rect {
  fill: #e00000;
  shape-rendering: crispEdges;
}

.dn rect {
  fill: #0000c8;
  shape-rendering: crispEdges;
}

.ma {
  fill: none;
  stroke-width: 1;
  shape-rendering: crispEdges;
}

.c5 {
  stroke: #4e9e00;
}

.c10 {
  stroke: #4848ff;
}

.c20 {
  stroke: #1e88dc;
}

.c60 {
  stroke: #0000c8;
}

.c120 {
  stroke: #7a1a4c;
}

.c240 {
  stroke: #ff4848;
}

.c33 {
  stroke: #a83232;
}

.arrow-red {
  stroke: #e00000;
  fill: none;
}

.arrow-blue {
  stroke: #1010e0;
  fill: none;
}

.trend {
  stroke: #0000f0;
  stroke-width: 2.6;
  fill: none;
}

.trend.thin {
  stroke-width: 2;
}

.axis {
  stroke: #b4b4b4;
  fill: none;
}

.boxes rect,
.boxes path {
  fill: none;
  stroke: #000;
  shape-rendering: crispEdges;
}

.boxes text {
  font: bold 8px 'Liberation Mono', monospace;
  fill: #000;
}

.vol-up {
  fill: #e00000;
  shape-rendering: crispEdges;
}

.vol-dn {
  fill: #0000c8;
  shape-rendering: crispEdges;
}

.scrollrow {
  height: 17px;
  flex: none;
  display: flex;
  align-items: stretch;
  background: #fff;
  box-sizing: border-box;
  border-bottom: 1px solid #bbb;
}

.sb-btn {
  width: 16px;
  flex: none;
  box-sizing: border-box;
  background: #ececec;
  border: 1px solid #fff;
  border-right-color: #777;
  border-bottom-color: #777;
}

.sb-tri {
  display: block;
  width: 14px;
  height: 14px;
  fill: #111;
}

.sb-track {
  width: 821px;
  flex: none;
  background: repeating-conic-gradient(#fff 0 25%, #e8e8e8 0 50%) 0 0 / 2px 2px;
}

.sb-thumb {
  width: 45px;
  flex: none;
  box-sizing: border-box;
  background: #f2f2f2;
  border: 1px solid #bbb;
}

.player {
  display: flex;
  align-items: center;
  gap: 2px;
  padding: 0 4px 0 0;
  width: 54px;
  flex: none;
  box-sizing: border-box;
  justify-content: center;
}

.pl {
  width: 13px;
  height: 13px;
  fill: #444;
}

.slider {
  width: 61px;
  flex: none;
  position: relative;
}

.slider-line {
  position: absolute;
  left: 0;
  right: 0;
  top: 3px;
  height: 1px;
  background: #555;
}

.slider-knob {
  position: absolute;
  left: 3px;
  top: 0;
  width: 3px;
  height: 6px;
  border: 1px solid #333;
  background: #fff;
}

.slider-ticks {
  position: absolute;
  left: 0;
  right: 0;
  bottom: 1px;
  height: 4px;
  background: repeating-linear-gradient(90deg, #555 0 1px, transparent 1px 5px);
}

.btns {
  display: flex;
  flex: none;
  margin-left: 4px;
}

.bbtn {
  width: 16px;
  flex: none;
  display: flex;
  align-items: center;
  justify-content: center;
  box-sizing: border-box;
}

.bbtn.sel {
  background: #ececec;
  outline: 1px solid #d0d0d0;
  outline-offset: -1px;
}

.bbtn-ico {
  width: 15px;
  height: 15px;
  color: #3c3c3c;
}

.bbtn-ico.stroke {
  fill: none;
  stroke: #444;
  stroke-width: 1;
}

.bbtn-t {
  font: 13px 'Liberation Sans', sans-serif;
  color: #444;
}

/* right tools */
.tools {
  width: 28px;
  margin: -1px 0 0 5px;
  flex: none;
  box-sizing: border-box;
  background: #f8f8f8;
  border: 1px solid #d0d0cc;
  height: 488px;
  display: flex;
  flex-direction: column;
}

.tool {
  height: 22.1px;
  flex: none;
  display: flex;
  align-items: center;
  justify-content: center;
  box-sizing: border-box;
}

.tool.div {
  border-top: 1px solid #d8d8d4;
}

.tool.sel {
  background: #ececec;
  border: 1px solid #c4c4c4;
  border-radius: 3px;
}

.tool-ico {
  width: 18px;
  height: 18px;
  fill: none;
  stroke: #333;
  stroke-width: 1;
  color: #3c3c3c;
}

.tool-ico.g {
  stroke: none;
}

.tool-ico .solid {
  fill: #333;
  stroke: none;
}

.tool-t {
  fill: #333;
  stroke: none;
  font-family: 'Liberation Sans', sans-serif;
}
</style>
